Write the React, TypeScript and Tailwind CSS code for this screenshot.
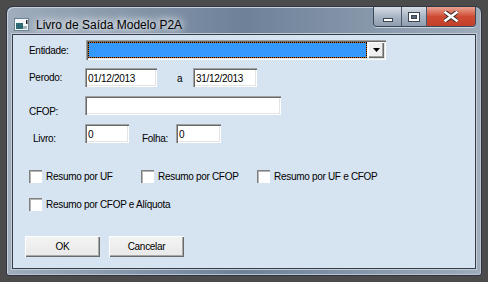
import React from 'react';

const sunken =
  'bg-white shadow-[inset_1px_1px_0_#a0a0a0,inset_2px_2px_0_#696969,inset_-1px_-1px_0_#ffffff,inset_-2px_-2px_0_#e3e3e3]';

function TextBox({ width, value = '' }: { width: string; value?: string }) {
  return (
    <div className={`${width} h-[19px] ${sunken} flex items-center pl-[3px] pt-px text-[10px] text-black`}>
      {value}
    </div>
  );
}

function CheckBox({ label }: { label: string }) {
  return (
    <div className="flex items-center gap-[4px]">
      <div className="w-[13px] h-[13px] bg-white shadow-[inset_1px_1px_0_#808080,inset_2px_2px_0_#b4b4b4,inset_-1px_-1px_0_#ffffff]" />
      <span className="text-[10px] text-black leading-none">{label}</span>
    </div>
  );
}

function FormButton({ label }: { label: string }) {
  return (
    <div className="w-[75px] h-[21px] flex items-center justify-center text-[10px] text-black bg-gradient-to-b from-[#f4f4f4] to-[#e8e8e8] shadow-[inset_1px_1px_0_#ffffff,inset_-1px_-1px_0_#6a6a6a,inset_-2px_-2px_0_#a9a9a9]">
      {label}
    </div>
  );
}

function AppIcon() {
  return (
    <svg width="16" height="14" viewBox="0 0 16 14">
      <rect x="0.5" y="0.5" width="14" height="12" fill="#f4f6f8" stroke="#6d7f93" />
      <rect x="2" y="5" width="7" height="6" fill="#2e6a74" />
      <rect x="9" y="8" width="4" height="3" fill="#9fb4b8" />
      <rect x="12" y="2" width="1.5" height="4" fill="#222" />
    </svg>
  );
}

function CaptionButtons() {
  return (
    <div className="flex h-[20px] rounded-b-[4px] border border-t-0 border-[#3b4656] overflow-hidden shadow-[0_1px_0_#c9d3de]">
      <div className="w-[28px] flex items-center justify-center bg-gradient-to-b from-[#d6dde5] via-[#a9b6c4] to-[#8d9cae] border-r border-[#4a5768]">
        <div className="w-[10px] h-[4px] bg-white border border-[#3a4452] mt-[6px]" />
      </div>
      <div className="w-[25px] flex items-center justify-center bg-gradient-to-b from-[#d6dde5] via-[#a9b6c4] to-[#8d9cae] border-r border-[#4a5768]">
        <div className="w-[10px] h-[8px] border-[2px] border-white outline outline-1 outline-[#3a4452] bg-[#5b6878] shadow-[inset_0_0_0_1px_#3a4452]" />
      </div>
      <div className="w-[48px] flex items-center justify-center bg-gradient-to-b from-[#e8a393] via-[#cf4a33] to-[#c1402a]">
        <svg width="14" height="11" viewBox="0 0 14 11">
          <path d="M1 1 L13 10 M13 1 L1 10" stroke="#3a2a2a" strokeWidth="4.5" strokeLinecap="square" />
          <path d="M1.5 1.5 L12.5 9.5 M12.5 1.5 L1.5 9.5" stroke="#ffffff" strokeWidth="2.6" strokeLinecap="square" />
        </svg>
      </div>
    </div>
  );
}

function ComboBox() {
  return (
    <div className={`w-[300px] h-[20px] ${sunken} flex p-[2px] gap-px`}>
      <div className="flex-1 bg-[#c86e1e]">
        <div className="h-full border border-dotted border-black bg-[#3399ff] bg-clip-padding" />
      </div>
      <div className="w-[16px] flex items-center justify-center bg-[#f0f0f0] shadow-[inset_1px_1px_0_#ffffff,inset_-1px_-1px_0_#696969,inset_-2px_-2px_0_#a0a0a0]">
        <svg width="7" height="4" viewBox="0 0 7 4">
          <path d="M0 0 H7 L3.5 4 Z" fill="#000" />
        </svg>
      </div>
    </div>
  );
}

export default function App() {
  return (
    <div className="w-[488px] h-[282px] bg-[#4b4b4b] pt-[6px] pl-[6px] font-['Liberation_Sans',Arial,sans-serif]">
      {/* window frame */}
      <div className="w-[476px] h-[270px] rounded-t-[7px] rounded-b-[3px] border border-[#2e3540] bg-gradient-to-r from-[#9fadbc] via-[#6e8199] to-[#9eacbb] shadow-[inset_1px_1px_0_#c7d1dc,inset_-1px_-1px_0_#b8c3cf] flex flex-col px-[5px] pb-[6px]">
        {/* title bar */}
        <div className="h-[27px] flex items-start">
          <div className="flex items-center pt-[9px] pl-[2px] gap-[6px]">
            <AppIcon />
            <span className="text-[12px] text-black [text-shadow:0_0_6px_#ffffff,0_0_10px_#ffffff,0_0_14px_#e8eef5]">
              Livro de Saída Modelo P2A
            </span>
          </div>
          <div className="flex-1" />
          <CaptionButtons />
        </div>

        {/* client area */}
        <div className="flex-1 border border-[#363d48] bg-[#d6e3f1] shadow-[0_0_0_1px_#c3cdd8] flex flex-col pt-[5px] text-[10px] tracking-[-0.3px] text-black">
          <div className="flex items-center h-[20px] pl-[16px]">
            <span className="w-[57px]">Entidade:</span>
            <ComboBox />
          </div>

          <div className="flex items-center h-[19px] pl-[16px] mt-[8px]">
            <span className="w-[56px]">Perodo:</span>
            <TextBox width="w-[72px]" value="01/12/2013" />
            <span className="w-[16px] ml-[20px] pt-[2px]">a</span>
            <TextBox width="w-[64px]" value="31/12/2013" />
          </div>

          <div className="flex items-start h-[19px] pl-[16px] mt-[9px]">
            <span className="w-[56px] pt-[8px]">CFOP:</span>
            <TextBox width="w-[196px]" value="" />
          </div>

          <div className="flex items-start h-[19px] pl-[16px] mt-[9px]">
            <span className="w-[56px] pl-[4px] pt-[7px]">Livro:</span>
            <TextBox width="w-[44px]" value="0" />
            <span className="w-[34px] ml-[13px] pt-[7px]">Folha:</span>
            <TextBox width="w-[45px]" value="0" />
          </div>

          <div className="flex items-center h-[13px] pl-[16px] mt-[27px]">
            <div className="w-[112px]">
              <CheckBox label="Resumo por UF" />
            </div>
            <div className="w-[116px]">
              <CheckBox label="Resumo por CFOP" />
            </div>
            <CheckBox label="Resumo por UF e CFOP" />
          </div>

          <div className="flex items-center h-[13px] pl-[16px] mt-[15px]">
            <CheckBox label="Resumo por CFOP e Alíquota" />
          </div>

          <div className="flex items-center h-[21px] gap-[9px] pl-[12px] mt-[25px]">
            <FormButton label="OK" />
            <FormButton label="Cancelar" />
          </div>
        </div>
      </div>
    </div>
  );
}
